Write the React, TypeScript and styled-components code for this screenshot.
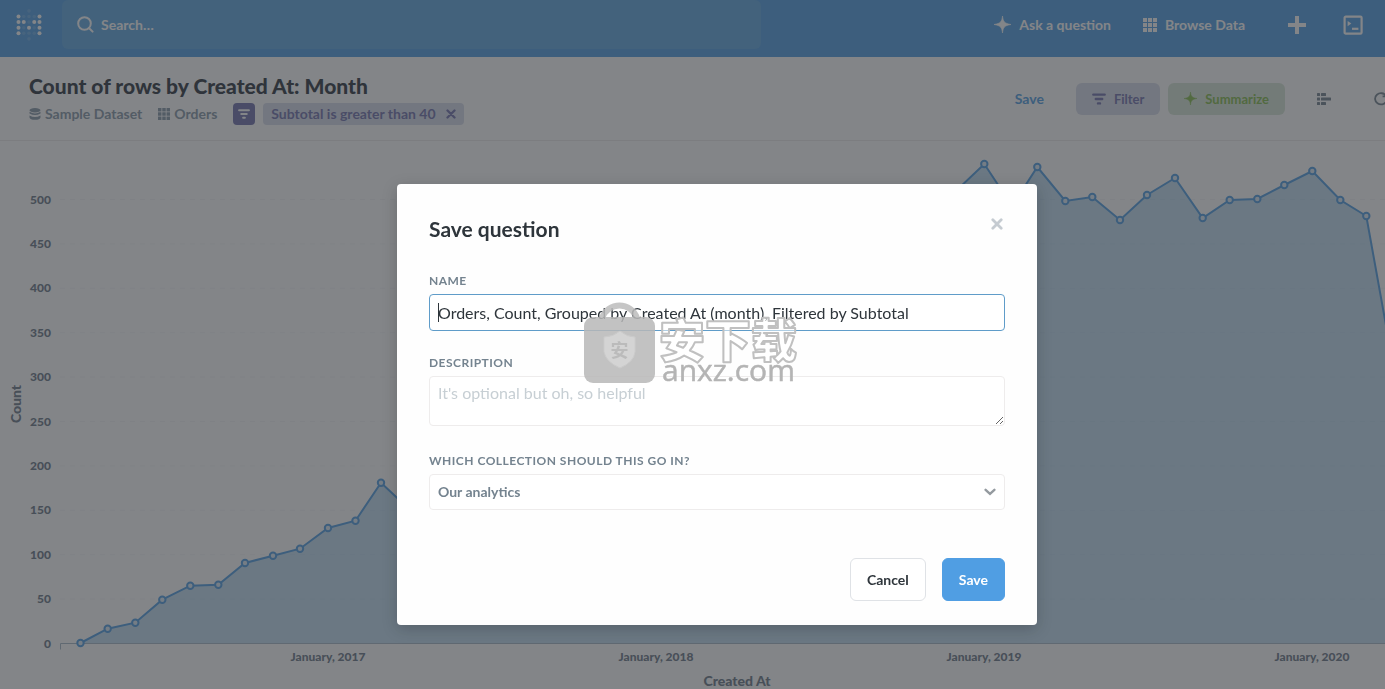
import React from "react";
import styled, { createGlobalStyle } from "styled-components";

const GlobalStyle = createGlobalStyle`
  * { box-sizing: border-box; }
  html, body, #root { height: 100%; }
  body { margin: 0; overflow: hidden; font-family: Lato, "Noto Sans CJK SC", sans-serif; color: #4c5773; background: #fff; }
  button, input, textarea, select { font-family: inherit; }
`;

const Page = styled.div`
  width: calc(100% + 49px);
  min-height: 100%;
  display: flex;
  flex-direction: column;
  overflow: hidden;
`;

const NavBar = styled.header`
  display: flex;
  align-items: center;
  height: 57px;
  padding: 0 71px 8px 0;
  background: #509ee3;
  color: #fff;
`;

const LogoLink = styled.a`
  display: flex;
  justify-content: center;
  flex: 0 0 62px;
  padding-right: 4px;
`;

const SearchBox = styled.label`
  display: flex;
  align-items: center;
  gap: 7px;
  flex: 1;
  max-width: 699px;
  height: 49px;
  padding-left: 15px;
  border-radius: 6px;
  background: #60a8e2;
`;

const SearchInput = styled.input`
  flex: 1;
  padding: 0;
  border: 0;
  outline: 0;
  background: transparent;
  color: #fff;
  font-size: 14px;
  font-weight: 700;
  &::placeholder { color: #fff; opacity: 1; }
`;

const NavActions = styled.nav`
  display: flex;
  align-items: center;
  gap: 32px;
  margin-left: auto;
`;

const NavLink = styled.a`
  display: flex;
  align-items: center;
  gap: 8px;
  color: #fff;
  font-size: 14px;
  font-weight: 700;
  text-decoration: none;
`;

const IconButton = styled.button<{ $color?: string }>`
  display: flex;
  padding: 0;
  border: 0;
  background: none;
  color: ${(p) => p.$color ?? "inherit"};
`;

const NavIcons = styled.div`
  display: flex;
  align-items: center;
  gap: 36px;
  margin-left: 10px;
`;

const QuestionHeader = styled.section`
  display: flex;
  align-items: center;
  justify-content: space-between;
  height: 84px;
  padding: 0 46px 0 29px;
  border-bottom: 1px solid #eeecec;
`;

const QuestionTitle = styled.h1`
  margin: 0 0 2px;
  font-size: 21px;
  line-height: 28px;
  font-weight: 900;
  color: #2e3540;
`;

const Crumbs = styled.div`
  display: flex;
  align-items: center;
  gap: 16px;
  height: 24px;
`;

const Crumb = styled.a`
  display: flex;
  align-items: center;
  gap: 4px;
  color: #8798a8;
  font-size: 14px;
  font-weight: 700;
  text-decoration: none;
`;

const FilterToggle = styled.button`
  display: flex;
  align-items: center;
  justify-content: center;
  width: 22px;
  height: 22px;
  padding: 0;
  border: 0;
  border-radius: 4px;
  background: #7172ad;
  color: #fff;
`;

const FilterPill = styled.span`
  display: flex;
  align-items: center;
  gap: 10px;
  height: 22px;
  margin-left: -8px;
  padding: 0 8px;
  border-radius: 4px;
  background: #d8dcea;
  color: #7172ad;
  font-size: 14px;
  font-weight: 700;
`;

const HeaderActions = styled.div`
  display: flex;
  align-items: center;
`;

const SaveLink = styled.button`
  margin-right: 32px;
  padding: 0;
  border: 0;
  background: none;
  color: #509ee3;
  font-size: 14px;
  font-weight: 700;
`;

const ToneButton = styled.button<{ $bg: string; $color: string }>`
  display: flex;
  align-items: center;
  gap: 8px;
  height: 32px;
  margin-right: 8px;
  padding: 0 16px;
  border: 0;
  border-radius: 6px;
  background: ${(p) => p.$bg};
  color: ${(p) => p.$color};
  font-size: 13px;
  font-weight: 700;
`;

const ViewIcons = styled.div`
  display: flex;
  align-items: center;
  gap: 43px;
  margin-left: 24px;
`;

const ChartSvg = styled.svg`
  display: block;
  width: 100%;
  height: auto;
  font-family: Lato, sans-serif;
  font-weight: 900;
  fill: #6b7888;
`;

const Overlay = styled.div`
  position: fixed;
  inset: 0 -49px 0 0;
  display: flex;
  justify-content: center;
  align-items: flex-start;
  padding-top: 184px;
  background: rgba(49, 51, 57, 0.6);
`;

const Dialog = styled.form`
  position: relative;
  width: 640px;
  padding: 31px 32px 24px;
  border-radius: 4px;
  background: #fefefe;
  box-shadow: 0 4px 16px rgba(0, 0, 0, 0.2);
`;

const DialogHead = styled.div`
  display: flex;
  align-items: flex-start;
  justify-content: space-between;
  height: 59px;
`;

const DialogTitle = styled.h2`
  margin: 0;
  font-size: 21px;
  line-height: 28px;
  font-weight: 700;
  color: #2e353b;
`;

const CloseButton = styled(IconButton)`
  padding: 3px 2px;
`;

const Field = styled.div<{ $gap: number }>`
  display: flex;
  flex-direction: column;
  gap: 6px;
  margin-bottom: ${(p) => p.$gap}px;
`;

const FieldLabel = styled.label`
  font-size: 12px;
  line-height: 14px;
  font-weight: 700;
  letter-spacing: 0.04em;
  text-transform: uppercase;
  color: #74838f;
`;

const InputWrap = styled.div`
  position: relative;
  display: flex;
`;

const Caret = styled.span`
  position: absolute;
  left: 9px;
  top: 9px;
  width: 1px;
  height: 19px;
  background: #2e353b;
`;

const TextInput = styled.input`
  flex: 1;
  height: 37px;
  padding: 0 8px;
  border: 1px solid #5f9cc9;
  border-radius: 4px;
  outline: 0;
  background: #fff;
  color: #2e353b;
  font-size: 16px;
`;

const TextArea = styled.textarea`
  height: 50px;
  padding: 6px 8px;
  border: 1px solid #eeecec;
  border-radius: 4px;
  background: #fff;
  font-size: 16px;
  line-height: 20px;
  resize: vertical;
  &::placeholder { color: #c7cfd4; opacity: 1; }
`;

const Select = styled.select`
  appearance: none;
  flex: 1;
  height: 36px;
  padding: 0 8px 2px;
  border: 1px solid #eeecec;
  border-radius: 4px;
  background: #fff;
  color: #74838f;
  font-size: 14px;
  font-weight: 700;
`;

const SelectArrow = styled.svg`
  position: absolute;
  right: 9px;
  top: 14px;
  pointer-events: none;
`;

const Buttons = styled.div`
  display: flex;
  justify-content: flex-end;
  gap: 16px;
`;

const Button = styled.button<{ $primary?: boolean }>`
  height: 43px;
  padding: 0 16px;
  border: 1px solid ${(p) => (p.$primary ? "#509ee3" : "#dfe2e6")};
  border-radius: 6px;
  background: ${(p) => (p.$primary ? "#509ee3" : "#fff")};
  color: ${(p) => (p.$primary ? "#fff" : "#2e353b")};
  font-size: 14px;
  font-weight: 700;
`;

const Watermark = styled.svg`
  position: absolute;
  left: 183px;
  top: 106px;
  pointer-events: none;
`;

const LOGO_SOLID = ["0,0", "4,0", "0,1", "1,1", "3,1", "4,1", "0,2", "2,2", "4,2", "0,3", "4,3"];
const LOGO_FAINT = ["2,-1", "1,0", "2,0", "3,0", "2,1", "1,2", "3,2", "1,3", "2,3", "3,3", "2,4"];

const Logo = () => (
  <svg width="26" height="34" viewBox="0 0 26 34" fill="#fff" aria-hidden="true">
    {LOGO_FAINT.map((k) => {
      const [x, y] = k.split(",").map(Number);
      return <circle key={k} cx={2.5 + x * 5.25} cy={8.5 + y * 5.6} r="1.8" opacity="0.15" />;
    })}
    {LOGO_SOLID.map((k) => {
      const [x, y] = k.split(",").map(Number);
      return <circle key={k} cx={2.5 + x * 5.25} cy={8.5 + y * 5.6} r="2" />;
    })}
  </svg>
);

const Spark = ({ size }: { size: number }) => (
  <svg width={size} height={size} viewBox="0 0 16 16" fill="currentColor" aria-hidden="true">
    <path d="M8 0C8.6 5.2 9.6 7 16 8C9.6 9 8.6 10.8 8 16C7.4 10.8 6.4 9 0 8C6.4 7 7.4 5.2 8 0Z" stroke="currentColor" strokeWidth="0.6" />
  </svg>
);

const Grid = ({ size }: { size: number }) => (
  <svg width={size} height={size} viewBox="0 0 14 14" fill="currentColor" aria-hidden="true">
    {[0, 5, 10].map((y) => [0, 5, 10].map((x) => <rect key={`${x}-${y}`} x={x} y={y} width="4" height="4" />))}
  </svg>
);

const FilterIcon = ({ size }: { size: number }) => (
  <svg width={size} height={size} viewBox="0 0 14 14" fill="none" stroke="currentColor" strokeWidth="2.4" strokeLinecap="round" aria-hidden="true">
    <path d="M1.3 2.6H12.7M3.8 7H10.2M6 11.4H8" />
  </svg>
);

const Cross = ({ size }: { size: number }) => (
  <svg width={size} height={size} viewBox="0 0 12 12" fill="none" stroke="currentColor" strokeWidth="2.8" strokeLinecap="round" aria-hidden="true">
    <path d="M1.8 1.8L10.2 10.2M10.2 1.8L1.8 10.2" />
  </svg>
);

const BASE = 502.5;
const LEADING: [number, number][] = [
  [80.5, 502], [107.7, 487.7], [135.3, 481.7], [162.3, 458.7], [190.3, 444.7], [218.3, 443.7],
  [245, 422], [273, 414.7], [300, 407.7], [328, 387], [355.5, 379.7], [381, 341.7],
];
const HIDDEN: [number, number][] = [[409, 368], [656, 210], [929, 75], [957, 49]];
const TRAILING: [number, number][] = [
  [984.3, 23], [1012, 65], [1037.3, 26], [1065.3, 60], [1092.3, 56], [1120, 79], [1147, 54],
  [1175, 37], [1202.7, 77], [1229.7, 59], [1257.3, 58], [1284.3, 44], [1312.3, 30],
  [1340.3, 59], [1366.3, 75], [1394, 229],
];
const POINTS = [...LEADING, ...HIDDEN, ...TRAILING];
const LINE = POINTS.map((p) => p.join(",")).join(" ");
const TICKS = [0, 50, 100, 150, 200, 250, 300, 350, 400, 450, 500];
const YEARS = [2017, 2018, 2019, 2020];

const Chart = () => (
  <ChartSvg viewBox="0 0 1434 580" role="img" aria-label="Count by Created At">
    {TICKS.slice(1).map((t) => (
      <line key={t} x1="60" x2="1434" y1={BASE - t * 0.888} y2={BASE - t * 0.888} stroke="#f5f6f8" strokeDasharray="5 5" />
    ))}
    <polygon points={`80.5,${BASE} ${LINE} 1394,${BASE}`} fill="#4fa0dc" fillOpacity="0.34" />
    <path d={`M60.5 ${BASE + 6}V${BASE}H1434`} fill="none" stroke="#a9bac8" />
    <polyline points={LINE} fill="none" stroke="#509ee3" strokeWidth="2" />
    {POINTS.map(([x, y]) => (
      <circle key={x} cx={x} cy={y} r="3.2" fill="#dcebf7" stroke="#509ee3" strokeWidth="2" />
    ))}
    {TICKS.map((t) => (
      <text key={t} x="51" y={BASE + 4 - t * 0.888} fontSize="12" textAnchor="end">{t}</text>
    ))}
    {YEARS.map((y, i) => (
      <text key={y} x={328 + i * 328} y="520" fontSize="12" textAnchor="middle">{`January, ${y}`}</text>
    ))}
    <text x="737" y="545" fontSize="14" textAnchor="middle">Created At</text>
    <text transform="translate(21 263) rotate(-90)" fontSize="14" textAnchor="middle">Count</text>
  </ChartSvg>
);

const CJK = '"Noto Sans CJK SC", sans-serif';

export default function App() {
  return (
    <>
      <GlobalStyle />
      <Page>
        <NavBar>
          <LogoLink href="#" aria-label="Home"><Logo /></LogoLink>
          <SearchBox>
            <svg width="17" height="17" viewBox="0 0 17 17" fill="none" stroke="#fff" strokeWidth="2" strokeLinecap="round" aria-hidden="true">
              <circle cx="7.5" cy="7.5" r="6.3" /><path d="M12.2 12.2L15.6 15.6" />
            </svg>
            <SearchInput type="text" placeholder="Search…" aria-label="Search" />
          </SearchBox>
          <NavActions>
            <NavLink href="#"><Spark size={17} />Ask a question</NavLink>
            <NavLink href="#"><Grid size={14} />Browse Data</NavLink>
            <NavIcons>
              <IconButton type="button" aria-label="New">
                <svg width="20" height="20" viewBox="0 0 20 20" fill="none" stroke="currentColor" strokeWidth="4"><path d="M10 1V19M1 10H19" /></svg>
              </IconButton>
              <IconButton type="button" aria-label="SQL editor">
                <svg width="20" height="20" viewBox="0 0 20 20" fill="none" stroke="currentColor" strokeWidth="2.2">
                  <rect x="1.6" y="1.6" width="17" height="17" rx="1.2" /><path d="M4.6 6L8.4 8.6L4.6 11.2Z" fill="currentColor" stroke="none" /><path d="M9 13.8H15.4" />
                </svg>
              </IconButton>
            </NavIcons>
          </NavActions>
        </NavBar>
        <QuestionHeader>
          <div>
            <QuestionTitle>Count of rows by Created At: Month</QuestionTitle>
            <Crumbs>
              <Crumb href="#">
                <svg width="12" height="12" viewBox="0 0 12 12" fill="currentColor" aria-hidden="true">
                  <ellipse cx="6" cy="2.2" rx="5.5" ry="2.2" />
                  <path d="M.5 3.8Q6 7 11.5 3.8V5.5Q6 8.6.5 5.5ZM.5 7.4Q6 10.4 11.5 7.4V9.4Q11 11.6 6 11.8Q1 11.6.5 9.4Z" />
                </svg>
                Sample Dataset
              </Crumb>
              <Crumb href="#"><Grid size={12} />Orders</Crumb>
              <FilterToggle type="button" aria-label="Toggle filters"><FilterIcon size={12} /></FilterToggle>
              <FilterPill>
                Subtotal is greater than 40
                <IconButton type="button" aria-label="Remove filter"><Cross size={10} /></IconButton>
              </FilterPill>
            </Crumbs>
          </div>
          <HeaderActions>
            <SaveLink type="button">Save</SaveLink>
            <ToneButton type="button" $bg="#d8dcea" $color="#7172ad"><FilterIcon size={14} />Filter</ToneButton>
            <ToneButton type="button" $bg="#d8e7d6" $color="#84bb4c"><Spark size={13} />Summarize</ToneButton>
            <ViewIcons>
              <IconButton type="button" aria-label="Show editor" $color="#74838f">
                <svg width="14" height="12" viewBox="0 0 14 12" fill="currentColor">
                  <rect width="3" height="3" rx=".5" /><rect y="4.5" width="3" height="3" rx=".5" /><rect y="9" width="3" height="3" rx=".5" />
                  <rect x="4" width="5" height="3" rx=".5" /><rect x="4" y="4.5" width="10" height="3" rx=".5" /><rect x="4" y="9" width="5" height="3" rx=".5" />
                </svg>
              </IconButton>
              <IconButton type="button" aria-label="Refresh" $color="#74838f">
                <svg width="14" height="14" viewBox="0 0 14 14" fill="none" stroke="currentColor" strokeWidth="1.8">
                  <path d="M12 3.6A6 5.6 0 1 0 12.4 9.4M12.4 0.6V4.4H8.6" />
                </svg>
              </IconButton>
            </ViewIcons>
          </HeaderActions>
        </QuestionHeader>
        <Chart />
      </Page>
      <Overlay>
        <Dialog role="dialog" aria-labelledby="dialog-title" onSubmit={(e) => e.preventDefault()}>
          <DialogHead>
            <DialogTitle id="dialog-title">Save question</DialogTitle>
            <CloseButton type="button" aria-label="Close" $color="#c5cbd1"><Cross size={12} /></CloseButton>
          </DialogHead>
          <Field $gap={25}>
            <FieldLabel htmlFor="name">Name</FieldLabel>
            <InputWrap>
              <TextInput id="name" defaultValue="Orders, Count, Grouped by Created At (month), Filtered by Subtotal" />
              <Caret />
            </InputWrap>
          </Field>
          <Field $gap={28}>
            <FieldLabel htmlFor="description">Description</FieldLabel>
            <TextArea id="description" placeholder="It's optional but oh, so helpful" />
          </Field>
          <Field $gap={48}>
            <FieldLabel htmlFor="collection">Which collection should this go in?</FieldLabel>
            <InputWrap>
              <Select id="collection"><option>Our analytics</option></Select>
              <SelectArrow width="12" height="8" viewBox="0 0 12 8" fill="none" stroke="#949a9f" strokeWidth="2.4" strokeLinecap="round">
                <path d="M1.6 1.8L6 5.8L10.4 1.8" />
              </SelectArrow>
            </InputWrap>
          </Field>
          <Buttons>
            <Button type="button">Cancel</Button>
            <Button type="submit" $primary>Save</Button>
          </Buttons>
          <Watermark width="240" height="110" viewBox="0 0 240 110" aria-hidden="true">
            <g opacity="0.85">
              <path d="M22 28A18.5 18.5 0 0 1 57 28" fill="none" stroke="#bdbdbd" strokeWidth="6" />
              <rect x="4" y="27" width="71" height="66" rx="9" fill="#b8b8b8" />
              <path d="M40 41Q47 47 55 47V62Q54 72 40 78Q26 72 24 62V47Q33 47 40 41Z" fill="#cdcdcd" stroke="#c3c3c3" />
              <text x="39.5" y="67" fontFamily={CJK} fontSize="18" fontWeight="700" textAnchor="middle" fill="#b0b0b0">安</text>
            </g>
            <text x="79" y="67" fontFamily={CJK} fontSize="46" fontWeight="900" fill="#fff" fillOpacity="0.5" stroke="#c0c0c0" strokeWidth="2" strokeLinejoin="round">安下载</text>
            <text x="82" y="91" fontFamily='"Open Sans", sans-serif' fontSize="30" fontWeight="500" fill="#b4b4b4" stroke="#b4b4b4" strokeWidth="0.5">anxz.com</text>
          </Watermark>
        </Dialog>
      </Overlay>
    </>
  );
}
